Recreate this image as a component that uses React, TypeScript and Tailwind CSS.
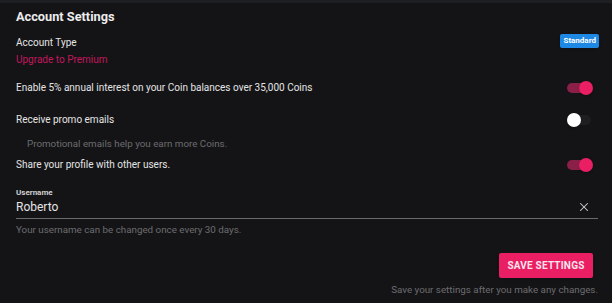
import { useState } from 'react'
import { X } from 'lucide-react'

type ToggleProps = {
  on: boolean
  onChange: () => void
}

function Toggle({ on, onChange }: ToggleProps) {
  return (
    <button onClick={onChange} className="relative h-[14px] w-[26px] shrink-0">
      <span className={`absolute left-0 top-[2px] h-[10px] w-[24px] rounded-full ${on ? 'bg-[#8a1f47]' : 'bg-[#1e1e20]'}`} />
      <span
        className={`absolute top-0 h-[14px] w-[14px] rounded-full shadow ${on ? 'left-[12px] bg-[#e91e63]' : 'left-0 bg-white'}`}
      />
    </button>
  )
}

export default function App() {
  const [interest, setInterest] = useState(true)
  const [promo, setPromo] = useState(false)
  const [share, setShare] = useState(true)
  const [username, setUsername] = useState('Roberto')

  return (
    <div className="h-[303px] w-[612px] overflow-hidden bg-[#141417] font-['Roboto',sans-serif] text-[#e4e4e4]">
      <div className="h-[3px] bg-[#1e1f22]" />
      <div className="pl-4 pr-[14px]">
        {/* Header */}
        <h1 className="pt-[6px] text-[12.75px] font-bold leading-4 text-[#ececec]">Account Settings</h1>

        {/* Account type */}
        <div className="mt-[11px] flex items-start justify-between">
          <div>
            <p className="text-[10px] leading-[14px]">Account Type</p>
            <p className="mt-[3px] text-[10px] leading-[14px] text-[#c2185b]">Upgrade to Premium</p>
          </div>
          <span className="mt-[-2px] mr-[-1px] rounded-[2px] bg-[#1e88e5] px-[3px] py-[1.5px] text-[8px] font-bold leading-[10.5px] text-white shadow">
            Standard
          </span>
        </div>

        {/* Toggles */}
        <div className="mt-[14px] flex items-center justify-between pr-[5px]">
          <p className="text-[10px] leading-[14px]">Enable 5% annual interest on your Coin balances over 35,000 Coins</p>
          <Toggle on={interest} onChange={() => setInterest(!interest)} />
        </div>

        <div className="mt-[18px] flex items-center justify-between pr-[5px]">
          <p className="text-[10px] leading-[14px]">Receive promo emails</p>
          <Toggle on={promo} onChange={() => setPromo(!promo)} />
        </div>
        <p className="mt-[10px] pl-[11px] text-[9.8px] leading-[14px] text-[#6c6c6e]">
          Promotional emails help you earn more Coins.
        </p>

        <div className="mt-[7px] flex items-center justify-between pr-[5px]">
          <p className="text-[10px] leading-[14px]">Share your profile with other users.</p>
          <Toggle on={share} onChange={() => setShare(!share)} />
        </div>

        {/* Username */}
        <div className="mt-[16px]">
          <label className="block text-[8px] font-bold leading-[10px] text-[#cfcfcf]">Username</label>
          <div className="flex items-center border-b border-[#6a6a6c] pb-[3px] pt-[1px]">
            <input
              value={username}
              onChange={(e) => setUsername(e.target.value)}
              className="flex-1 bg-transparent text-[12px] leading-[16px] text-[#e4e4e4] outline-none"
            />
            <button onClick={() => setUsername('')} className="mr-[7px] text-[#d0d0d0]">
              <X className="h-[14px] w-[14px]" strokeWidth={1.8} />
            </button>
          </div>
          <p className="mt-[4px] text-[9.8px] leading-[14px] text-[#6c6c6e]">Your username can be changed once every 30 days.</p>
        </div>

        {/* Save */}
        <div className="mt-[16px] flex flex-col items-end">
          <button className="mr-[5px] h-[25px] w-[94px] rounded-[2px] bg-[#e91e63] text-[10px] font-bold tracking-[0.2px] text-[#fbe3ec] shadow">
            SAVE SETTINGS
          </button>
          <p className="mt-[5px] text-[9.8px] leading-[14px] text-[#6c6c6e]">Save your settings after you make any changes.</p>
        </div>
      </div>
    </div>
  )
}
